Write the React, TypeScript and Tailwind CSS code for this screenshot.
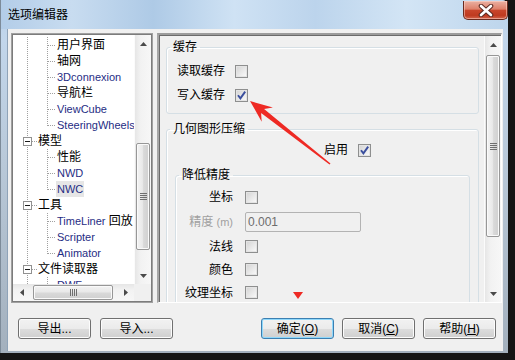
import React from 'react';

type TreeRow = { label: string; depth: 0 | 1; last?: boolean; en?: boolean; sel?: boolean; tail?: string };

const rows: TreeRow[] = [
    { label: '用户界面', depth: 1 },
    { label: '轴网', depth: 1 },
    { label: '3Dconnexion', depth: 1, en: true },
    { label: '导航栏', depth: 1 },
    { label: 'ViewCube', depth: 1, en: true },
    { label: 'SteeringWheels', depth: 1, en: true, last: true },
    { label: '模型', depth: 0 },
    { label: '性能', depth: 1 },
    { label: 'NWD', depth: 1, en: true },
    { label: 'NWC', depth: 1, en: true, sel: true, last: true },
    { label: '工具', depth: 0 },
    { label: 'TimeLiner', depth: 1, en: true, tail: ' 回放' },
    { label: 'Scripter', depth: 1, en: true },
    { label: 'Animator', depth: 1, en: true, last: true },
    { label: '文件读取器', depth: 0 },
    { label: 'DWF', depth: 1, en: true },
];

const Arrow = ({ dir }: { dir: 'up' | 'down' | 'left' | 'right' }) => {
    const pts = { up: '0,4 3.5,0 7,4', down: '0,0 7,0 3.5,4', left: '4,0 4,7 0,3.5', right: '0,0 0,7 4,3.5' }[dir];
    const vertical = dir === 'up' || dir === 'down';
    return (
        <svg width={vertical ? 7 : 4} height={vertical ? 4 : 7}>
            <polygon points={pts} fill="#4a4a4a" />
        </svg>
    );
};

const TreeLines = ({ row }: { row: TreeRow }) => {
    const dots = { stroke: '#a0a0a0', strokeDasharray: '1 1', shapeRendering: 'crispEdges' as const };
    if (row.depth === 0) {
        return (
            <svg width="25" height="16" className="shrink-0">
                <line x1="14.5" y1="0" x2="14.5" y2="4" {...dots} />
                <line x1="14.5" y1="14" x2="14.5" y2="16" {...dots} />
                <rect x="10.5" y="4.5" width="8" height="8" fill="#fff" stroke="#919191" shapeRendering="crispEdges" />
                <line x1="12" y1="8.5" x2="17" y2="8.5" stroke="#1a1a1a" shapeRendering="crispEdges" />
                <line x1="19" y1="8.5" x2="24" y2="8.5" {...dots} />
            </svg>
        );
    }
    return (
        <svg width="44" height="16" className="shrink-0">
            <line x1="14.5" y1="0" x2="14.5" y2="16" {...dots} />
            <line x1="34.5" y1="0" x2="34.5" y2={row.last ? 9 : 16} {...dots} />
            <line x1="35" y1="8.5" x2="43" y2="8.5" {...dots} />
        </svg>
    );
};

const CheckBox = ({ checked = false }: { checked?: boolean }) => (
    <div className="w-[13px] h-[13px] shrink-0 border border-[#8e8f8f] bg-[#f6f6f6]">
        <div className="w-full h-full border border-[#e4e4e4] bg-[linear-gradient(135deg,#d6d6d6,#f8f8f8)] flex items-center justify-center">
            {checked && (
                <svg width="9" height="9" viewBox="0 0 9 9">
                    <path d="M1 4.2 L3.4 7.4 L8.2 0.6" stroke="#3b4f9e" strokeWidth="1.9" fill="none" />
                </svg>
            )}
        </div>
    </div>
);

const Grip = ({ horizontal = false }: { horizontal?: boolean }) =>
    horizontal ? (
        <div className="flex gap-[1px] h-[7px]">
            <div className="w-[1px] bg-[#707070]" />
            <div className="w-[1px] bg-[#707070]" />
            <div className="w-[1px] bg-[#707070]" />
            <div className="w-[1px] bg-[#707070]" />
        </div>
    ) : (
        <div className="flex flex-col gap-[1px] w-[7px]">
            <div className="h-[1px] bg-[#707070]" />
            <div className="h-[1px] bg-[#707070]" />
            <div className="h-[1px] bg-[#707070]" />
            <div className="h-[1px] bg-[#707070]" />
        </div>
    );

const VScroll = ({ thumb }: { thumb: string }) => (
    <div className="w-[17px] h-full shrink-0 flex flex-col bg-[linear-gradient(90deg,#e6e6e6,#f2f2f2_35%,#f7f7f7)] border-l border-[#fbfbfb]">
        <div className="h-[17px] flex items-center justify-center shrink-0">
            <Arrow dir="up" />
        </div>
        <div className="flex-1 min-h-0">
            <div className={`${thumb} mx-[1px] rounded-[2px] border border-[#979797] bg-[linear-gradient(90deg,#f3f3f3,#e9e9e9_45%,#d9d9d9_55%,#d0d0d0)] shadow-[inset_0_0_0_1px_#fafafa] flex items-center justify-center`}>
                <Grip />
            </div>
        </div>
        <div className="h-[17px] flex items-center justify-center shrink-0">
            <Arrow dir="down" />
        </div>
    </div>
);

const Btn = ({ children, primary = false }: { children: React.ReactNode; primary?: boolean }) => (
    <div
        className={`w-[73px] h-[21px] rounded-[3px] border flex items-center justify-center leading-[16px] bg-[linear-gradient(#f2f2f2,#ebebeb_50%,#dddddd_50%,#cfcfcf)] ${
            primary ? 'border-[#3c7fb1] shadow-[inset_0_0_0_1px_#8fd8fb]' : 'border-[#707070] shadow-[inset_0_0_0_1px_#fcfcfc]'
        }`}
    >
        {children}
    </div>
);

const Legend = ({ children }: { children: React.ReactNode }) => (
    <legend className="ml-[3px] px-[3px] leading-[16px]">{children}</legend>
);

const Row = ({ label, children, gray = false, h }: { label: React.ReactNode; children: React.ReactNode; gray?: boolean; h: string }) => (
    <div className={`${h} flex items-center`}>
        <div className={`w-[57px] text-right leading-[16px] ${gray ? 'text-[#a0a0a0]' : ''}`}>{label}</div>
        <div className="ml-[12px]">{children}</div>
    </div>
);

export default function App() {
    return (
        <div className="relative w-[515px] h-[360px] overflow-hidden bg-[#151515] font-['Liberation_Sans','Noto_Sans_CJK_SC',sans-serif] text-[12px] text-black">
            <div className="w-[508px] h-[353px] flex flex-col rounded-tr-[6px] bg-[linear-gradient(180deg,#b9d1ea_0px,#c2d6eb_40px,#b9c9d9_160px,#a3b0bd_100%)] border-l border-[#7d8b99]">
                {/* title bar */}
                <div className="h-[29px] shrink-0 flex items-start justify-between bg-[linear-gradient(90deg,#b3cde8_0%,#c8dcf0_14%,#aecae6_30%,#cfe2f4_46%,#bcd4ec_62%,#d3e5f5_80%,#bdd5ec_100%)] rounded-tr-[6px]">
                    <div className="pl-[7px] pt-[7px] leading-[16px] text-[12px]">选项编辑器</div>
                    <div className="mt-[1px] w-[45px] h-[19px] rounded-b-[5px] border border-[#6a2a1e] border-t-0 bg-[linear-gradient(180deg,#eab1a3_0%,#de806a_45%,#c8452b_52%,#bf3a20_80%,#d2654d_100%)] shadow-[inset_0_0_0_1px_rgba(255,220,210,0.5)] flex items-center justify-center">
                        <svg width="16" height="13" viewBox="0 0 16 13">
                            <path d="M3 2 L13 11 M13 2 L3 11" stroke="#5a2a22" strokeWidth="4.6" strokeLinecap="round" />
                            <path d="M3 2 L13 11 M13 2 L3 11" stroke="#fff" strokeWidth="2.6" strokeLinecap="round" />
                        </svg>
                    </div>
                </div>

                {/* client area */}
                <div className="ml-[6px] mr-[5px] mb-[2px] flex-1 bg-[#f0f0f0] border-l border-[#8fa3b8] flex flex-col">
                    <div className="pt-[4px] flex gap-[4px] pl-[3px]">
                        {/* tree panel */}
                        <div className="w-[142px] h-[270px] border border-[#a0a0a0]">
                            <div className="w-full h-full border border-[#7c7c7c] bg-white flex flex-col">
                                <div className="h-[249px] flex">
                                    <div className="w-[121px] h-full overflow-hidden pt-[2px]">
                                        {rows.map((row) => (
                                            <div key={row.label} className="h-[16px] flex items-center whitespace-nowrap">
                                                <TreeLines row={row} />
                                                <span
                                                    className={`leading-[16px] ${row.en ? 'text-[11px] text-[#1f2d84]' : ''} ${
                                                        row.sel ? 'bg-[#e6e6e6] px-[1px] -ml-[1px]' : ''
                                                    }`}
                                                >
                                                    {row.label}
                                                    {row.tail && <span className="text-[12px] text-black">{row.tail}</span>}
                                                </span>
                                            </div>
                                        ))}
                                    </div>
                                    <VScroll thumb="mt-[91px] h-[107px]" />
                                </div>
                                <div className="h-[17px] flex">
                                    <div className="w-[121px] h-full flex bg-[linear-gradient(180deg,#e6e6e6,#f2f2f2_35%,#f7f7f7)]">
                                        <div className="w-[17px] h-full flex items-center justify-center">
                                            <Arrow dir="left" />
                                        </div>
                                        <div className="flex-1 flex items-center">
                                            <div className="ml-[3px] w-[80px] h-[15px] rounded-[2px] border border-[#979797] bg-[linear-gradient(180deg,#f3f3f3,#e9e9e9_45%,#d9d9d9_55%,#d0d0d0)] shadow-[inset_0_0_0_1px_#fafafa] flex items-center justify-center">
                                                <Grip horizontal />
                                            </div>
                                        </div>
                                        <div className="w-[17px] h-full flex items-center justify-center">
                                            <Arrow dir="right" />
                                        </div>
                                    </div>
                                    <div className="flex-1 bg-[#f0f0f0]" />
                                </div>
                            </div>
                        </div>

                        {/* options panel */}
                        <div className="w-[345px] h-[270px] border-t-2 border-l-2 border-t-[#9c9c9c] border-l-[#a6a6a6] border-b border-r border-b-white border-r-white">
                            <div className="w-full h-full border-t border-l border-[#6b6b6b] flex">
                                <div className="w-[324px] h-full overflow-hidden pl-[6px] pr-[5px] pt-[3px]">
                                    <fieldset className="border border-[#d5dfe5] rounded-[3px] shadow-[inset_1px_1px_0_#fff] min-w-0">
                                        <Legend>缓存</Legend>
                                        <div className="pt-[4px] pb-[6px] pl-[10px]">
                                            <div className="h-[24px] flex items-center">
                                                <div className="w-[58px] leading-[16px]">读取缓存</div>
                                                <CheckBox />
                                            </div>
                                            <div className="h-[24px] flex items-center">
                                                <div className="w-[58px] leading-[16px]">写入缓存</div>
                                                <CheckBox checked />
                                            </div>
                                        </div>
                                    </fieldset>

                                    <fieldset className="mt-[7px] border border-[#d5dfe5] rounded-[3px] shadow-[inset_1px_1px_0_#fff] min-w-0">
                                        <Legend>几何图形压缩</Legend>
                                        <div className="pt-[2px] px-[8px]">
                                            <div className="h-[22px] flex items-center pl-[149px]">
                                                <div className="w-[34px] leading-[16px]">启用</div>
                                                <CheckBox checked />
                                            </div>
                                            <fieldset className="mt-[6px] border border-[#d5dfe5] rounded-[3px] shadow-[inset_1px_1px_0_#fff] min-w-0">
                                                <Legend>降低精度</Legend>
                                                <div className="pt-[2px] pb-[20px]">
                                                    <Row label="坐标" h="h-[24px]">
                                                        <CheckBox />
                                                    </Row>
                                                    <Row
                                                        gray
                                                        h="h-[26px]"
                                                        label={
                                                            <>
                                                                精度 <span className="text-[11px]">(m)</span>
                                                            </>
                                                        }
                                                    >
                                                        <div className="w-[116px] h-[20px] border border-[#b3b3b3] rounded-[2px] bg-[#f0f0f0] text-[#6d6d6d] pl-[2px] flex items-center leading-[16px]">
                                                            0.001
                                                        </div>
                                                    </Row>
                                                    <Row label="法线" h="h-[23px]">
                                                        <CheckBox />
                                                    </Row>
                                                    <Row label="颜色" h="h-[23px]">
                                                        <CheckBox />
                                                    </Row>
                                                    <Row label="纹理坐标" h="h-[23px]">
                                                        <CheckBox />
                                                    </Row>
                                                </div>
                                            </fieldset>
                                        </div>
                                    </fieldset>
                                </div>
                                <VScroll thumb="mt-[2px] h-[182px]" />
                            </div>
                        </div>
                    </div>

                    {/* buttons */}
                    <div className="mt-[15px] h-[21px] flex justify-between pl-[10px] pr-[7px]">
                        <div className="flex gap-[9px]">
                            <Btn>导出...</Btn>
                            <Btn>导入...</Btn>
                        </div>
                        <div className="flex gap-[8px]">
                            <Btn primary>
                                确定(<span className="underline">O</span>)
                            </Btn>
                            <Btn>
                                取消(<span className="underline">C</span>)
                            </Btn>
                            <Btn>
                                帮助(<span className="underline">H</span>)
                            </Btn>
                        </div>
                    </div>
                </div>
            </div>

            {/* red annotation marks */}
            <svg className="absolute left-0 top-0 pointer-events-none" width="515" height="360">
                <polygon
                    points="250,101 272.9,107.5 264.1,108.9 330.5,163.4 329.5,164.6 261.1,112.9 261.7,121.7"
                    fill="#ee2a24"
                />
                <polygon points="293,292 303,292 298,299" fill="#ee2a24" />
            </svg>
        </div>
    );
}
